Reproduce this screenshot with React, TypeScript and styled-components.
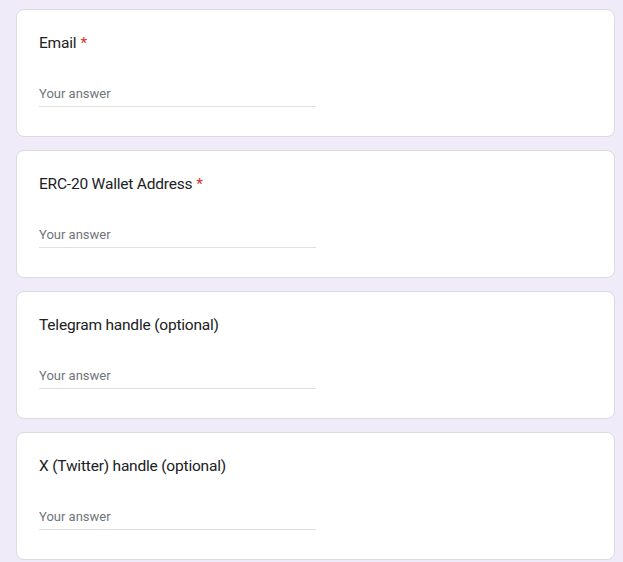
import React from "react";
import styled, { createGlobalStyle } from "styled-components";

const GlobalStyle = createGlobalStyle`
  html, body {
    margin: 0;
    padding: 0;
    background: #f0ebf8;
    font-family: Roboto, "Liberation Sans", Arial, sans-serif;
  }
`;

const Page = styled.div`
  display: flex;
  flex-direction: column;
  gap: 13px;
  padding: 9px 8px 0 16px;
  min-height: 562px;
  box-sizing: border-box;
`;

const Card = styled.div`
  background: #fff;
  border: 1px solid #dadce0;
  border-radius: 8px;
  padding: 21px 22px 29px;
  display: flex;
  flex-direction: column;
`;

const Label = styled.div`
  font-size: 15.5px;
  line-height: 24px;
  color: #202124;
  letter-spacing: -0.2px;
`;

const Required = styled.span`
  color: #d93025;
  margin-left: 4px;
`;

const Field = styled.input`
  margin-top: 28px;
  width: 50%;
  border: none;
  border-bottom: 1px solid #e0e0e0;
  padding: 0 0 3px;
  font-family: inherit;
  font-size: 13px;
  line-height: 20px;
  height: 24px;
  box-sizing: border-box;
  color: #202124;
  outline: none;
  background: transparent;

  &::placeholder {
    color: #70757a;
  }
`;

const questions = [
  { label: "Email", required: true },
  { label: "ERC-20 Wallet Address", required: true },
  { label: "Telegram handle (optional)", required: false },
  { label: "X (Twitter) handle (optional)", required: false },
];

export default function App() {
  return (
    <>
      <GlobalStyle />
      <Page>
        {questions.map((q) => (
          <Card key={q.label}>
            <Label>
              {q.label}
              {q.required && <Required>*</Required>}
            </Label>
            <Field placeholder="Your answer" />
          </Card>
        ))}
      </Page>
    </>
  );
}
